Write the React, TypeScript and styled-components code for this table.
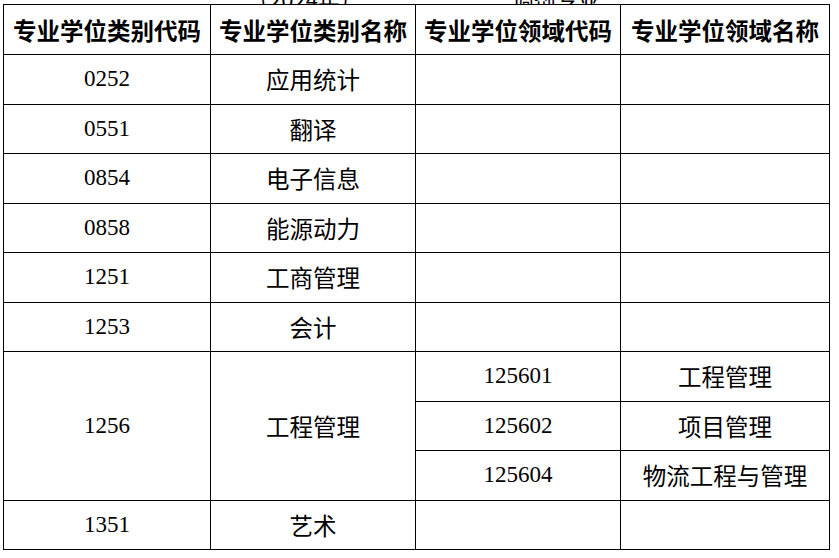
import React from "react";
import styled, { createGlobalStyle } from "styled-components";

const GlobalStyle = createGlobalStyle`
  html, body {
    margin: 0;
    padding: 0;
    background: #fff;
  }
  body {
    font-family: "Noto Sans CJK SC", "Noto Sans", sans-serif;
    color: #000;
  }
`;

type Row = {
  code: string;
  name: string;
  fields?: { code: string; name: string }[];
};

const rows: Row[] = [
  { code: "0252", name: "应用统计" },
  { code: "0551", name: "翻译" },
  { code: "0854", name: "电子信息" },
  { code: "0858", name: "能源动力" },
  { code: "1251", name: "工商管理" },
  { code: "1253", name: "会计" },
  {
    code: "1256",
    name: "工程管理",
    fields: [
      { code: "125601", name: "工程管理" },
      { code: "125602", name: "项目管理" },
      { code: "125604", name: "物流工程与管理" },
    ],
  },
  { code: "1351", name: "艺术" },
];

export default function App() {
  return (
    <>
      <GlobalStyle />
      <Page>
        <Caption>
          <CaptionText>（2024年）</CaptionText>
          <CaptionText>调剂专业</CaptionText>
        </Caption>
        <Table>
          <colgroup>
            <col style={{ width: 207 }} />
            <col style={{ width: 205 }} />
            <col style={{ width: 205 }} />
            <col style={{ width: 209 }} />
          </colgroup>
          <thead>
            <tr>
              <HeadCell>专业学位类别代码</HeadCell>
              <HeadCell>专业学位类别名称</HeadCell>
              <HeadCell>专业学位领域代码</HeadCell>
              <HeadCell>专业学位领域名称</HeadCell>
            </tr>
          </thead>
          <tbody>
            {rows.map((r) => {
              if (!r.fields) {
                return (
                  <BodyRow key={r.code}>
                    <Cell $num>{r.code}</Cell>
                    <Cell>{r.name}</Cell>
                    <Cell $num />
                    <Cell />
                  </BodyRow>
                );
              }
              return r.fields.map((f, i) => (
                <BodyRow key={f.code}>
                  {i === 0 && (
                    <>
                      <Cell $num rowSpan={r.fields!.length}>
                        {r.code}
                      </Cell>
                      <Cell rowSpan={r.fields!.length}>{r.name}</Cell>
                    </>
                  )}
                  <Cell $num>{f.code}</Cell>
                  <Cell>{f.name}</Cell>
                </BodyRow>
              ));
            })}
          </tbody>
        </Table>
      </Page>
    </>
  );
}

const Page = styled.div`
  padding-left: 3px;
`;

const Caption = styled.div`
  height: 4px;
  overflow: hidden;
  display: flex;
  align-items: flex-end;
  gap: 150px;
  padding-left: 244px;
`;

const CaptionText = styled.div`
  font-size: 22px;
  line-height: 22px;
  margin-bottom: -5px;
  white-space: nowrap;
  color: #000;
`;

const Table = styled.table`
  border-collapse: collapse;
  table-layout: fixed;
  width: 827px;

  td, th {
    border: 1.5px solid #000;
    padding: 0;
    text-align: center;
    vertical-align: middle;
  }
`;

const HeadCell = styled.th`
  height: 49px;
  font-family: "Noto Sans CJK SC", sans-serif;
  font-weight: 700;
  font-size: 23.5px;
  white-space: nowrap;
  color: #000;
`;

const BodyRow = styled.tr`
  height: 49.5px;
`;

const Cell = styled.td<{ $num?: boolean }>`
  font-family: ${(p) =>
    p.$num
      ? `"Liberation Serif", "Noto Sans CJK SC", serif`
      : `"Noto Sans CJK SC", sans-serif`};
  font-size: ${(p) => (p.$num ? "23px" : "23.5px")};
  font-weight: 400;
  white-space: nowrap;
  color: #000;
  padding-top: ${(p) => (p.$num ? "2px" : "0")};
`;
